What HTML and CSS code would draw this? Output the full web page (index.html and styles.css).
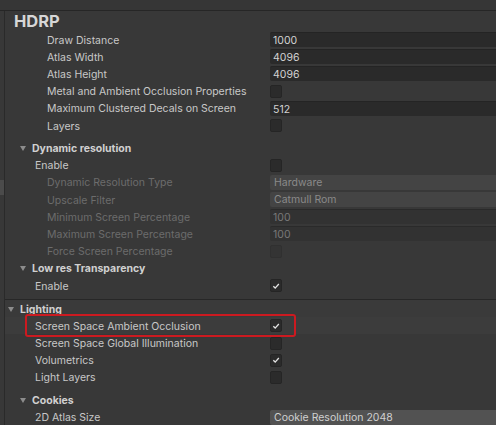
FILE: index.html
```html
<!DOCTYPE html>
<html lang="en">
<head>
  <meta charset="UTF-8" />
  <title>HDRP</title>
  <link rel="stylesheet" href="styles.css">
</head>
<body>
  <div class="topbar"></div>
  <div class="panel">
    <div class="scroll-thumb"></div>
    <div class="inspector">
      <h1 class="title">HDRP</h1>

      <div class="row"><span class="label in2">Draw Distance</span><span class="field">1000</span></div>
      <div class="row"><span class="label in2">Atlas Width</span><span class="field">4096</span></div>
      <div class="row"><span class="label in2">Atlas Height</span><span class="field">4096</span></div>
      <div class="row"><span class="label in2">Metal and Ambient Occlusion Properties</span><span class="check"></span></div>
      <div class="row"><span class="label in2">Maximum Clustered Decals on Screen</span><span class="field">512</span></div>
      <div class="row"><span class="label in2">Layers</span><span class="check"></span></div>

      <div class="row fold sub"><span class="label"><i class="tri"></i>Dynamic resolution</span></div>
      <div class="row"><span class="label in1">Enable</span><span class="check"></span></div>
      <div class="row off"><span class="label in2">Dynamic Resolution Type</span><span class="drop">Hardware</span></div>
      <div class="row off"><span class="label in2">Upscale Filter</span><span class="drop">Catmull Rom</span></div>
      <div class="row off"><span class="label in2">Minimum Screen Percentage</span><span class="field">100</span></div>
      <div class="row off"><span class="label in2">Maximum Screen Percentage</span><span class="field">100</span></div>
      <div class="row off"><span class="label in2">Force Screen Percentage</span><span class="check"></span></div>

      <div class="row fold"><span class="label"><i class="tri"></i>Low res Transparency</span></div>
      <div class="row"><span class="label in1">Enable</span><span class="check on"><svg viewBox="0 0 12 12"><path d="M2.8 6.4 5 8.5 9.4 3.6"/></svg></span></div>

      <div class="row fold top"><span class="label"><i class="tri"></i>Lighting</span></div>
      <div class="row marked">
        <span class="label in1">Screen Space Ambient Occlusion</span><span class="check on"><svg viewBox="0 0 12 12"><path d="M2.8 6.4 5 8.5 9.4 3.6"/></svg></span>
        <div class="callout"></div>
      </div>
      <div class="row"><span class="label in1">Screen Space Global Illumination</span><span class="check"></span></div>
      <div class="row"><span class="label in1">Volumetrics</span><span class="check on"><svg viewBox="0 0 12 12"><path d="M2.8 6.4 5 8.5 9.4 3.6"/></svg></span></div>
      <div class="row"><span class="label in1">Light Layers</span><span class="check"></span></div>

      <div class="row fold sub"><span class="label"><i class="tri"></i>Cookies</span></div>
      <div class="row"><span class="label in1">2D Atlas Size</span><span class="drop light">Cookie Resolution 2048</span></div>
    </div>
  </div>
</body>
</html>
```
FILE: styles.css
```css
html, body {
  margin: 0;
  height: 425px;
  overflow: hidden;
}
body {
  background-color: #383838;
  font-family: Inter, "Noto Sans", sans-serif;
  font-size: 10.5px;
  color: #c8c8c8;
}
.topbar {
  height: 10px;
  background-color: #363636;
  border-bottom: 1px solid #262626;
}
.panel {
  display: flex;
  height: 414px;
}
.scroll-thumb {
  width: 4px;
  border-right: 1px solid #2a2a2a;
  position: relative;
}
.scroll-thumb::after {
  content: "";
  position: absolute;
  left: 0;
  top: 169px;
  width: 4px;
  height: 15px;
  background-color: #4b4b4b;
}
.inspector {
  flex: 1;
  min-width: 0;
}
.title {
  margin: 0;
  height: 20px;
  padding-left: 9px;
  font-size: 16.5px;
  font-weight: 700;
  line-height: 20px;
  color: #d6d6d6;
}
.row {
  display: grid;
  grid-template-columns: 265px 1fr;
  align-items: center;
  height: 17.2px;
  position: relative;
}
.label {
  white-space: nowrap;
  overflow: hidden;
  padding-top: 1px;
}
.in1 { padding-left: 30px; }
.in2 { padding-left: 42px; }
.fold .label {
  font-weight: 700;
  color: #d0d0d0;
  padding-left: 15px;
  display: flex;
  align-items: center;
}
.fold.sub { margin-top: 5.3px; }
.fold.top {
  margin-top: 5px;
  border-top: 1px solid #272727;
  background-color: #3a3a3a;
}
.fold.top .label { padding-left: 3px; }
.tri {
  width: 0;
  height: 0;
  border-left: 3.5px solid transparent;
  border-right: 3.5px solid transparent;
  border-top: 5px solid #8c8c8c;
  margin-right: 6px;
}
.field, .drop {
  height: 15px;
  line-height: 15px;
  padding-left: 3px;
  background-color: #2a2a2a;
  border-top: 1px solid #242424;
  box-sizing: border-box;
  color: #d2d2d2;
  border-radius: 2px 0 0 2px;
}
.drop {
  background-color: #484848;
  border-top: none;
  padding-left: 4px;
}
.drop.light {
  background-color: #525252;
  color: #d0d0d0;
}
.check {
  width: 12px;
  height: 13px;
  box-sizing: border-box;
  background-color: #2b2b2b;
  border: 1px solid #252525;
  border-radius: 2px;
  display: flex;
  align-items: center;
  justify-content: center;
}
.check svg {
  width: 10px;
  height: 10px;
  fill: none;
  stroke: #e2e2e2;
  stroke-width: 1.6;
}
.off .label { color: #6c6c6c; }
.off .field { background-color: #323232; color: #787878; border-top-color: #2a2a2a; }
.off .drop { background-color: #444444; color: #8a8a8a; }
.off .check { background-color: #343434; border-color: #303030; }
.marked { background-color: #3c3c3c; }
.callout {
  position: absolute;
  left: 20px;
  top: -3px;
  width: 271px;
  height: 23px;
  box-sizing: border-box;
  border: 2px solid #cc1a20;
  border-radius: 3px;
  pointer-events: none;
}
```
